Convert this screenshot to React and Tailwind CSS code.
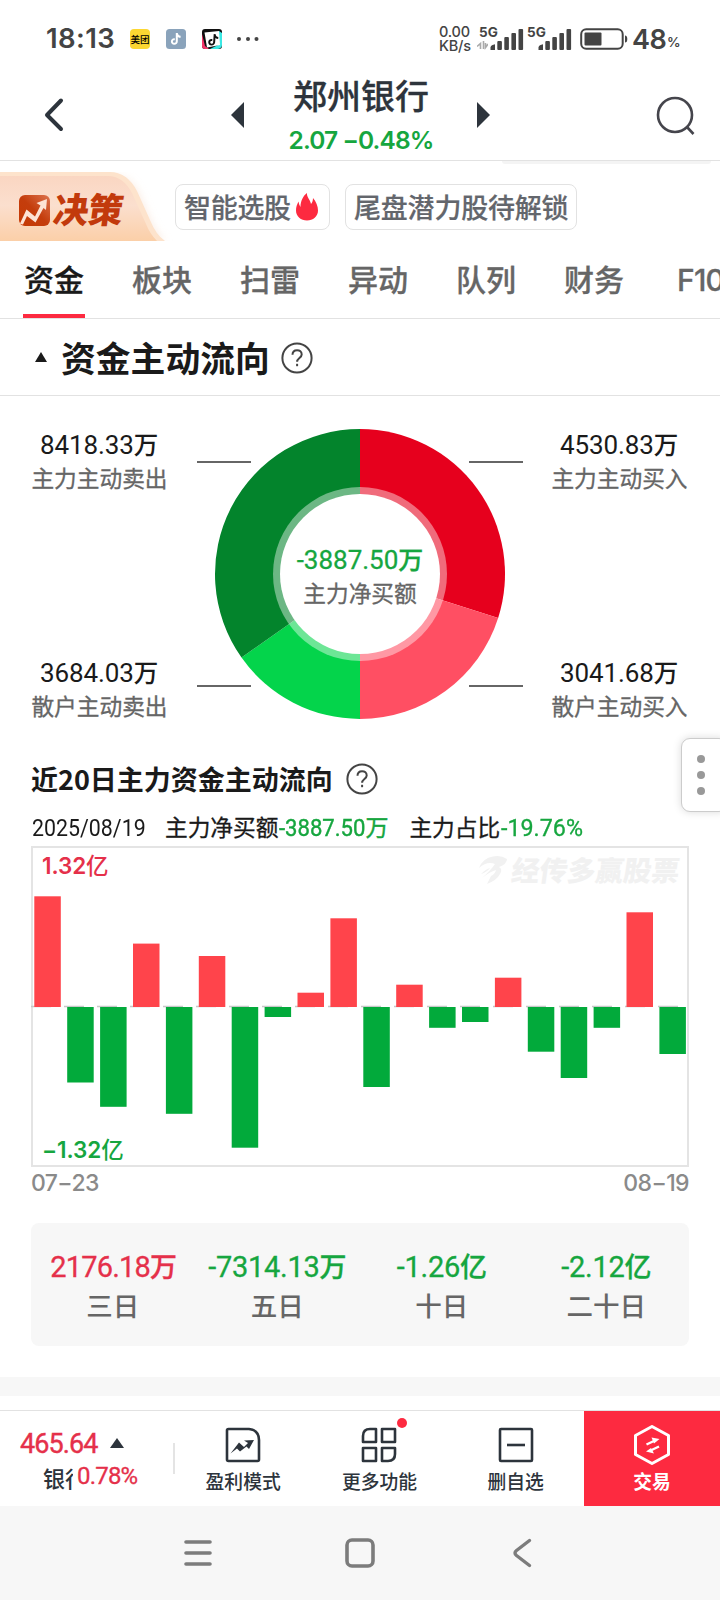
const cjk = "font-['Noto_Sans_CJK_SC',sans-serif]";
const num = "font-[Roboto,'Noto_Sans_CJK_SC',sans-serif]";
const ui = "font-[Inter,'Noto_Sans_CJK_SC',sans-serif]";

const tabs = ["资金", "板块", "扫雷", "异动", "队列", "财务"];

// 近20日主力净买额柱高
const flows = [
  110.7, -75.5, -99.8, 63.4, -106.8, 51, -140.7, -10, 14.3, 88.7,
  -80, 22.3, -20.8, -15, 29.3, -44.7, -71, -20.8, 94.7, -47,
];

const summary = [
  { label: "三日", value: "2176.18", unit: "万", up: true },
  { label: "五日", value: "-7314.13", unit: "万", up: false },
  { label: "十日", value: "-1.26", unit: "亿", up: false },
  { label: "二十日", value: "-2.12", unit: "亿", up: false },
];

const TikTokNote = ({ fill }) => (
  <path
    fill={fill}
    d="M9.8 4h2c.2 1.7 1.2 2.6 2.8 2.7v2.1c-1 0-2-.3-2.8-.9v4.3c0 2-1.5 3.500-3.500 3.500s-3.400-1.500-3.400-3.300c0-2 1.700-3.500 3.900-3.200v2.100c-1-.3-1.900.3-1.900 1.100 0 .8.6 1.400 1.400 1.400.9 0 1.500-.6 1.500-1.600z"
  />
);

const Signal = ({ className }) => (
  <svg width="34" height="21" viewBox="0 0 34 21" className={className} fill="#444">
    <path d="M.5 18.500q0-2 2-2.600l2.500-.6V21H.5z" />
    <rect x="7.300" y="12" width="4.600" height="9" rx="1" />
    <rect x="14.300" y="8" width="4.600" height="13" rx="1" />
    <rect x="21.400" y="4" width="4.600" height="17" rx="1" />
    <rect x="28.500" y="0" width="4.600" height="21" rx="1" />
  </svg>
);

const StatusBar = () => (
  <div className={`${ui} flex h-[78px] items-center pl-[46px] text-[#444]`}>
    <span className="w-[84px] text-[27.500px] leading-none font-semibold tracking-[0.4px]">18:13</span>
    <div className={`${cjk} flex size-5 items-center justify-center rounded bg-[#fcd732] text-[9.500px] font-medium text-black`}>
      美团
    </div>
    <svg width="20" height="20" viewBox="0 0 20 20" className="ml-4">
      <rect width="20" height="20" rx="3.500" fill="#8aa3bb" />
      <TikTokNote fill="#fff" />
    </svg>
    <svg width="20" height="20" viewBox="0 0 20 20" className="ml-4">
      <rect width="20" height="20" rx="3" fill="#111" />
      <path d="M0 5l3 12 4 3H3q-3 0-3-3z" fill="#f5356a" />
      <path d="M17 2l3 2v12q0 3-4 4H8l8-4z" fill="#3be8e4" />
      <path d="M2.500 3.500L17 2l1 14-13 2.500z" fill="#fff" />
      <g transform="translate(1.500 1) rotate(4 10 10)">
        <TikTokNote fill="#111" />
      </g>
    </svg>
    <svg width="24" height="6" viewBox="0 0 24 6" className="ml-[14px]" fill="#444">
      <circle cx="3" cy="3" r="2" />
      <circle cx="12" cy="3" r="2" />
      <circle cx="20.500" cy="3" r="2" />
    </svg>
    <div className="ml-[179px] w-[38px] text-[14.500px] leading-[14px] font-medium tracking-[-0.2px]">
      <div>0.00</div>
      <div>KB/s</div>
    </div>
    <div className="relative flex h-[22px] w-[48px] items-end">
      <span className="absolute top-[-2px] left-[2px] text-[13.500px] leading-none font-bold">5G</span>
      <svg width="11" height="9" viewBox="0 0 11 9" fill="none" stroke="#aaa" strokeWidth="1.600">
        <path d="M0 5.500L3.500 2.500V8M6.500 0V8M8.500 2v4.500L11 3" />
      </svg>
      <Signal className="ml-[2px] shrink-0" />
    </div>
    <div className="relative flex h-[22px] w-[54px] items-end justify-end pr-[7px]">
      <span className="absolute top-[-2px] left-[2px] text-[13.500px] leading-none font-bold">5G</span>
      <Signal />
    </div>
    <svg width="48" height="22" viewBox="0 0 48 22" className="ml-[1px]">
      <rect x="1.200" y="1.200" width="41.500" height="19.600" rx="5" fill="none" stroke="#444" strokeWidth="2" />
      <rect x="4.500" y="4.500" width="17" height="13" rx="1" fill="#444" />
      <path d="M45 7.500q2.300 0 2.300 3.500T45 14.500z" fill="#444" />
    </svg>
    <span className="ml-[4px] w-[35px] text-[27px] leading-none font-semibold tracking-[-0.6px]">48</span>
    <span className="pt-[7px] text-[13.500px] leading-none font-semibold">%</span>
  </div>
);

const Header = () => (
  <div className="relative flex h-[83px] items-center border-b border-[#e2e2e2] text-[#2d343c]">
    <svg width="22" height="36" viewBox="0 0 22 36" className="mb-[8px] ml-[43px]" fill="none" stroke="currentColor" strokeWidth="4" strokeLinecap="round" strokeLinejoin="round">
      <path d="M18 3.500L4 18l14 14" />
    </svg>
    <svg width="14" height="26" viewBox="0 0 14 26" className="mb-[9px] ml-[166px]" fill="currentColor">
      <path d="M13 0v26L0 13z" />
    </svg>
    <div className="mx-auto -mt-[6px] flex w-[200px] flex-col items-center">
      <div className={`${cjk} text-[34px] leading-[42px] font-medium [-webkit-text-stroke:0.3px]`}>郑州银行</div>
      <div className={`${ui} mt-[6px] text-[24.500px] leading-[36px] font-semibold tracking-[-0.9px] whitespace-pre text-[#16a63f]`}>2.07 −0.48%</div>
    </div>
    <svg width="14" height="26" viewBox="0 0 14 26" className="mr-[165px] mb-[9px]" fill="currentColor">
      <path d="M0 0v26l13-13z" />
    </svg>
    <svg width="40" height="40" viewBox="0 0 40 40" className="mr-[24px] mb-[6px]" fill="none" stroke="#45454c" strokeWidth="2.600">
      <circle cx="19" cy="19" r="17" />
      <path d="M30.500 30.500l7 7.500" />
    </svg>
    <div className="absolute top-[83px] left-[502px] h-[3px] w-[209px] rounded-b bg-[#f4f4f4]" />
  </div>
);

const Promo = () => (
  <div className="flex h-20 items-start">
    <div className="relative mt-[11px] h-[69px] w-[175px]">
      <svg width="175" height="69" viewBox="0 0 175 69" className="absolute inset-0">
        <defs>
          <linearGradient id="peach" x1="0" y1="0" x2="0" y2="1">
            <stop offset="0" stopColor="#fad6c2" />
            <stop offset="0.450" stopColor="#fbdfce" />
            <stop offset="1" stopColor="#fbcfa8" />
          </linearGradient>
          <linearGradient id="rust" x1="1" y1="0" x2="0" y2="1">
            <stop offset="0" stopColor="#dd7550" />
            <stop offset="0.500" stopColor="#c43d0c" />
            <stop offset="1" stopColor="#c63a05" />
          </linearGradient>
          <filter id="soft" x="-20%" y="-20%" width="140%" height="140%">
            <feGaussianBlur stdDeviation="4" />
          </filter>
        </defs>
        <path d="M0 4H115Q130 4 139 22L152 52Q158 64 166 69H0Z" fill="#f6d8c4" opacity="0.500" filter="url(#soft)" />
        <path d="M0 0H110Q127 0 137 19L150 48Q156 63 165 69H0Z" fill="#fde3cc" />
        <path d="M0 4H108Q123 4 132 21L146 52Q150 62 157 69H0Z" fill="url(#peach)" />
        <rect x="19" y="23" width="31" height="31" rx="6" fill="url(#rust)" />
        <path d="M20 51.500l6.500-14 8.500 7 5.500-11-4-2.500L47 27l-1 11-2.500-2-8 14.500-8.500-6.500-4 8.500q-2 0-3-1z" fill="#fde3d4" />
      </svg>
      <span className={`${cjk} absolute top-[17px] left-[54px] -skew-x-8 text-[35px] leading-[38px] font-black tracking-[-0.5px] text-[#c23a0c]`}>决策</span>
    </div>
    <div className={`${cjk} mt-[23px] flex gap-[15px] text-[27px] leading-[44px] font-medium tracking-[-0.2px] text-[#63666c] [-webkit-text-stroke:0.2px]`}>
      <div className="flex h-[46px] w-[155px] items-center rounded-lg border border-[#e2e2e2] pl-[8px] tracking-[-0.3px] whitespace-nowrap">
        智能选股
        <svg width="22" height="28" viewBox="0 0 22 28" className="mb-[1px] ml-[5px] shrink-0" fill="#fd2a40">
          <path d="M11 0c-.5 4 3 6 4 11 1.500-1.500 2-4 2-6 3 3.500 5 8.500 5 12.500 0 6-5 10-11 10S0 23.500 0 17.500C0 14 1 11.500 2.500 8.500c.5 2.500 1 4 2 5.500C4.500 8 7 3 11 0z" />
        </svg>
      </div>
      <div className="h-[46px] w-[232px] rounded-lg border border-[#e2e2e2] pl-[8px] leading-[43px] whitespace-nowrap">尾盘潜力股待解锁</div>
    </div>
  </div>
);

const Tabs = () => (
  <div className={`${cjk} flex h-[78px] items-stretch gap-[46px] overflow-hidden border-b border-[#e2e2e2] pl-[23px] text-[30px] leading-[74px] font-medium text-[#666] [-webkit-text-stroke:0.3px]`}>
    {tabs.map((tab, i) => (
      <div
        key={tab}
        className={i === 0 ? "w-[62px] shrink-0 border-b-4 border-[#fd2a40] text-center text-[#1a1a1a]" : "w-[62px] shrink-0 text-center"}
      >
        {tab}
      </div>
    ))}
    <div className={`${ui} shrink-0 pt-[2px] pl-[6px] text-[30px] tracking-[-0.8px]`}>F10</div>
  </div>
);

const Help = ({ className }) => (
  <svg width="32" height="32" viewBox="0 0 32 32" className={className} fill="none" stroke="#444" strokeWidth="2">
    <circle cx="16" cy="16" r="14.600" />
    <path d="M11.500 12.800c0-3 2-4.600 4.600-4.600s4.600 1.700 4.600 4.200c0 3.500-4.600 3.700-4.600 7.400" />
    <path d="M16.100 21.800v2.400" />
  </svg>
);

const Figure = ({ value, label }) => (
  <div className="w-[137px] text-center whitespace-nowrap">
    <div className={`${num} -ml-px text-[26px] leading-[34px] tracking-[-0.1px] text-[#1a1a1a]`}>
      {value}
      <span className="text-[24.500px] font-medium">万</span>
    </div>
    <div className={`${cjk} text-[22.700px] leading-[30px] text-[#666] [-webkit-text-stroke:0.3px]`}>{label}</div>
  </div>
);

// 从12点方向顺时针计角度
const slice = (from, to) => {
  const at = (deg) => {
    const a = (deg * Math.PI) / 180;
    return `${163 + 145 * Math.sin(a)} ${145 - 145 * Math.cos(a)}`;
  };
  return `M163 145L${at(from)}A145 145 0 0 1 ${at(to)}Z`;
};

const Donut = () => (
  <div className="flex h-[334px] justify-between px-[31px] pt-[33px]">
    <div className="-mt-[1px] flex h-[293px] flex-col justify-between">
      <Figure value="8418.33" label="主力主动卖出" />
      <Figure value="3684.03" label="散户主动卖出" />
    </div>
    <div className="relative h-[290px] w-[326px]">
      <svg width="326" height="290" viewBox="0 0 326 290">
        <path d={slice(0, 107.7)} fill="#e6001d" />
        <path d={slice(107.7, 180)} fill="#ff4f63" />
        <path d={slice(180, 234.8)} fill="#04d44b" />
        <path d={slice(234.8, 360)} fill="#03842c" />
        <circle cx="163" cy="145" r="87" fill="#fff" fillOpacity="0.420" />
        <circle cx="163" cy="145" r="80" fill="#fff" />
        <path d="M0 33h54M272 33h54M0 257h54M272 257h54" stroke="#666" strokeWidth="2" />
      </svg>
      <div className="absolute inset-x-0 top-[114px] text-center">
        <div className={`${num} text-[26px] leading-[34px] text-[#16a63f] [-webkit-text-stroke:0.3px]`}>
          -3887.50<span className="text-[25px] font-medium">万</span>
        </div>
        <div className={`${cjk} text-[22.700px] leading-[29px] text-[#666] [-webkit-text-stroke:0.3px]`}>主力净买额</div>
      </div>
    </div>
    <div className="-mt-[1px] mr-px -ml-px flex h-[293px] flex-col justify-between">
      <Figure value="4530.83" label="主力主动买入" />
      <Figure value="3041.68" label="散户主动买入" />
    </div>
  </div>
);

const FlowChart = () => (
  <div className="relative mx-[31px] h-[321px] w-[658px]">
    <svg width="658" height="321" viewBox="0 0 658 321" className="absolute inset-0">
      <rect x="1" y="1" width="656" height="319" fill="none" stroke="#e4e4e4" strokeWidth="2" />
      <path d="M0 160.500H658" stroke="#c8c8c8" strokeWidth="1.500" strokeDasharray="20 13" />
      <g transform="translate(448 10)" fill="#f1f1f1">
        <path d="M0 12Q4 2 14 0.500Q22-1 28 3Q28 8 20 11Q24 13 21 18Q18 24 8 28L12 20Q16 18 17 14Q12 15 3 22Q12 14 16 8Q8 5 0 12Z" />
        <path d="M2 18Q7 13 11 12Q8 16 2 18Z" />
      </g>
      {flows.map((v, i) => (
        <rect
          key={i}
          x={3.3 + i * 32.9}
          y={v > 0 ? 161 - v : 161}
          width="26.500"
          height={Math.abs(v)}
          fill={v > 0 ? "#ff444b" : "#02aa3b"}
        />
      ))}
    </svg>
    <div className={`${cjk} absolute top-[7px] right-[9px] -skew-x-8 text-[28px] leading-[32px] font-black text-[#f1f1f1]`}>经传多赢股票</div>
    <div className={`${ui} relative flex h-full flex-col justify-between pt-[5px] pb-[2px] pl-[11px] text-[22.500px] leading-[30px] font-semibold tracking-[-0.1px]`}>
      <span className="text-[#e5304a]">1.32<span className="font-medium">亿</span></span>
      <span className="text-[#16a63f]">−1.32<span className="font-medium">亿</span></span>
    </div>
  </div>
);

const Summary = () => (
  <div className="mx-[31px] mt-[24px] flex h-[123px] rounded-lg bg-[#f7f7f7] pt-[24px]">
    {summary.map((s) => (
      <div key={s.label} className="flex-1 text-center whitespace-nowrap">
        <div
          className={
            s.up
              ? `${num} text-[29px] leading-[40px] tracking-[-0.8px] text-[#e5304a] [-webkit-text-stroke:0.3px]`
              : `${num} pr-px text-[29px] leading-[40px] tracking-[-0.3px] text-[#16a63f] [-webkit-text-stroke:0.3px]`
          }
        >
          {s.value}
          <span className="text-[27px] font-medium">{s.unit}</span>
        </div>
        <div className={`${cjk} pr-px text-[26.500px] leading-[34px] font-medium text-[#666]`}>{s.label}</div>
      </div>
    ))}
  </div>
);

const ToolItem = ({ label, children }) => (
  <div className="flex w-[136.300px] flex-col items-center pt-[16px]">
    <svg width="36" height="36" viewBox="0 0 36 36" fill="none" stroke="#2d343c" strokeWidth="2.600" className="overflow-visible">
      {children}
    </svg>
    <div className={`${cjk} mt-[4px] text-[18.800px] leading-[28px] font-medium text-[#2d343c]`}>{label}</div>
  </div>
);

const BottomBar = () => (
  <div className="flex h-[96px] border-t border-[#e2e2e2] bg-white">
    <div className="flex w-[175px] shrink-0 items-start">
      <div className="w-[173px]">
        <div className={`${num} flex items-center pt-[18px] pl-[20px] text-[27px] leading-[30px] tracking-[-0.9px] text-[#e5304a] [-webkit-text-stroke:0.4px]`}>
          465.64
          <svg width="14" height="10" viewBox="0 0 14 10" className="mb-[2px] ml-[12px]" fill="#2d343c">
            <path d="M7 0l7 10H0z" />
          </svg>
        </div>
        <div className="flex items-center pl-[43px] leading-[30px] whitespace-nowrap">
          <span className={`${cjk} mt-[3px] w-[30px] overflow-hidden text-[22px] font-medium text-[#2d343c]`}>银行</span>
          <span className={`${num} pl-[4px] text-[24px] tracking-[-0.8px] text-[#e5304a] [-webkit-text-stroke:0.3px]`}>0.78%</span>
        </div>
      </div>
      <div className="mt-[32px] h-[31px] w-[2px] bg-[#e4e4e4]" />
    </div>
    <ToolItem label="盈利模式">
      <path d="M3.500 2H24Q34 3 34 13V32.500Q34 34 32.500 34H3.500Q2 34 2 32.500V3.500Q2 2 3.500 2Z" />
      <path d="M5.500 26.500L14 15.500l5 4.500 4-4-4-2.500L29 13l-5 9-2.500-2.500L15 24.500l-3-3z" fill="#2d343c" stroke="none" />
    </ToolItem>
    <ToolItem label="更多功能">
      <path d="M9 2H15V15H2V9Q2 2 9 2Z" strokeLinejoin="round" />
      <path d="M21 2H34V15H21Z" strokeLinejoin="round" />
      <path d="M2 21H15V34H2Z" strokeLinejoin="round" />
      <path d="M21 21H34V27Q34 34 27 34H21Z" strokeLinejoin="round" />
      <circle cx="41" cy="-4" r="5" fill="#fd2a40" stroke="none" />
    </ToolItem>
    <ToolItem label="删自选">
      <rect x="2" y="2" width="32" height="32" rx="1" />
      <path d="M9 18h18" />
    </ToolItem>
    <div className="flex flex-1 flex-col items-center bg-[#fd2a40] pt-[14px] text-white">
      <svg width="38" height="40" viewBox="0 0 38 40" fill="none" stroke="#fff" strokeWidth="3" strokeLinejoin="round">
        <path d="M19 1.500L35.500 10.500V29.500L19 38.500L2.500 29.500V10.500Z" />
        <path d="M13.500 19.500L23 15M26 21.500L16.500 26" strokeWidth="2.400" />
        <path d="M18.500 12.500l8 1.500-5.500 4.500zM21 28.500l-8-2 5-3.500z" fill="#fff" stroke="none" />
      </svg>
      <div className={`${cjk} mt-[2px] text-[18.800px] leading-[28px] font-bold`}>交易</div>
    </div>
  </div>
);

const SystemNav = () => (
  <div className="flex h-[94px] bg-[#f7f7f7] pt-[30px]">
    <svg width="360" height="34" viewBox="0 0 360 34" className="ml-[180px]" fill="none" stroke="#7c7c7c" strokeWidth="3.600" strokeLinecap="round" strokeLinejoin="round">
      <path d="M6 6h24M6 17h24M6 28h24" />
      <rect x="167" y="4" width="26" height="26" rx="5" />
      <path d="M349.500 4.500L336.500 14.500Q333.500 17 336.500 19.500L349.500 29.500" strokeWidth="3.400" />
    </svg>
  </div>
);

const App = () => (
  <div className="relative flex h-[1600px] w-[720px] flex-col overflow-hidden bg-white">
    <StatusBar />
    <Header />
    <Promo />
    <Tabs />

    <div className="flex h-[77px] items-center border-b border-[#e2e2e2] pl-[35px]">
      <svg width="12" height="10" viewBox="0 0 12 10" fill="#1a1a1a">
        <path d="M6 0l6 10H0z" />
      </svg>
      <h2 className={`${cjk} -mt-px ml-[14px] text-[34.800px] leading-[50px] font-bold text-[#1a1a1a]`}>资金主动流向</h2>
      <Help className="mt-[2px] ml-[11px]" />
    </div>

    <Donut />

    <div className="mt-[29px] flex h-[40px] items-center pl-[31px]">
      <h3 className={`${cjk} text-[27px] leading-[40px] font-bold text-[#1a1a1a]`}>近20日主力资金主动流向</h3>
      <Help className="ml-[13px]" />
    </div>

    <div className={`${num} mt-[12px] flex h-[35px] items-center pl-[32px] text-[24px] leading-[33px] whitespace-nowrap text-[#1a1a1a]`}>
      <span className="w-[133px] shrink-0">
        <span className="inline-block origin-left scale-x-[0.89]">2025/08/19</span>
      </span>
      <span className="shrink-0 text-[22.700px] [-webkit-text-stroke:0.3px]">主力净买额</span>
      <span className="w-[131px] shrink-0 pl-px text-[#16a63f] [-webkit-text-stroke:0.4px]">
        <span className="inline-block w-[86px] origin-left scale-x-[0.92]">-3887.50</span>
        <span className="text-[23px]">万</span>
      </span>
      <span className="shrink-0 text-[22.700px] [-webkit-text-stroke:0.3px]">主力占比</span>
      <span className="inline-block origin-left scale-x-[0.97] pl-px text-[#16a63f] [-webkit-text-stroke:0.3px]">-19.76%</span>
    </div>

    <FlowChart />
    <div className={`${ui} flex h-[32px] justify-between px-[31px] text-[23px] leading-[32px] font-medium tracking-[-0.6px] text-[#8a8a8a]`}>
      <span>07−23</span>
      <span>08−19</span>
    </div>

    <Summary />

    <div className="mt-[31px] h-[19px] shrink-0 bg-[#f7f7f7]" />
    <div className="mt-auto">
      <BottomBar />
      <SystemNav />
    </div>

    <div className="absolute top-[738px] right-[-8px] flex h-[74px] w-[47px] flex-col items-center justify-center gap-2 rounded-[9px] border border-[#ccc] bg-white pr-[8px] shadow-[0_0_8px_rgba(0,0,0,0.15)]">
      <i className="size-2 rounded-full bg-[#999]" />
      <i className="size-2 rounded-full bg-[#999]" />
      <i className="size-2 rounded-full bg-[#999]" />
    </div>
  </div>
);

export default App;
